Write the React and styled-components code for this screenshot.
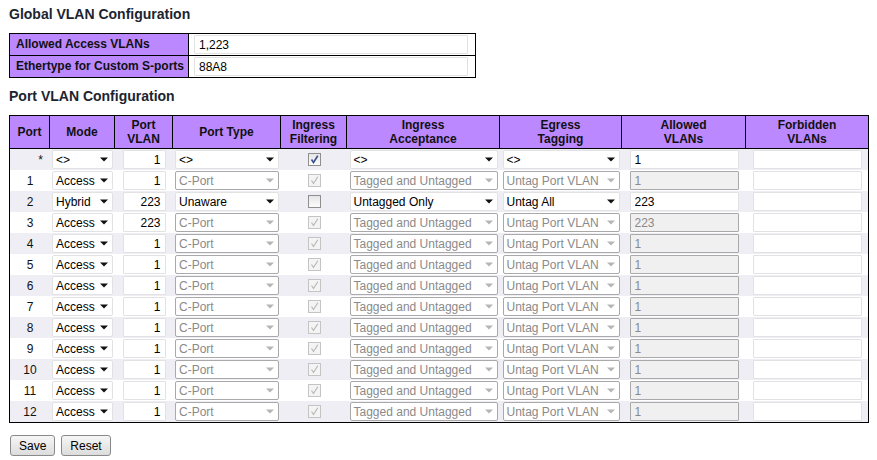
import React from "react"
import styled, { createGlobalStyle } from "styled-components"

const GlobalStyle = createGlobalStyle`
body {
    margin: 0;
    background: #fff;
    font-family: "Liberation Sans", Arial, sans-serif;
    font-size: 12px;
    color: #000;
}
`

const COLS = "40px 65px 58px 108px 66px 153px 122px 124px 122px"

const rows = [
    { port: 1, mode: "Access", pvid: 1, type: "C-Port", filt: true, acc: "Tagged and Untagged", egr: "Untag Port VLAN", allowed: "1" },
    { port: 2, mode: "Hybrid", pvid: 223, type: "Unaware", filt: false, acc: "Untagged Only", egr: "Untag All", allowed: "223", hybrid: true },
    { port: 3, mode: "Access", pvid: 223, type: "C-Port", filt: true, acc: "Tagged and Untagged", egr: "Untag Port VLAN", allowed: "223" },
    ...[4, 5, 6, 7, 8, 9, 10, 11, 12].map((p) => ({
        port: p, mode: "Access", pvid: 1, type: "C-Port", filt: true, acc: "Tagged and Untagged", egr: "Untag Port VLAN", allowed: "1",
    })),
]

const Arrow = ({ disabled }) => (
    <svg width="8" height="5" viewBox="0 0 8 5">
        <path d="M0 0.5 H8 L4 4.5 Z" fill={disabled ? "#b5b5b5" : "#111"} />
    </svg>
)

const Select = ({ value, width, disabled }) => (
    <SelectBox $width={width} $disabled={disabled}>
        <span>{value}</span>
        <Arrow disabled={disabled} />
    </SelectBox>
)

const Check = ({ checked, disabled }) => (
    <CheckBox $disabled={disabled}>
        {checked && (
            <svg width="11" height="11" viewBox="0 0 11 11">
                <path
                    d="M2.5 5.5 L4.5 8.5 L8.8 1.8"
                    fill="none"
                    stroke={disabled ? "#b8b8b8" : "#3c4f8f"}
                    strokeWidth={disabled ? 1.2 : 1.6}
                />
            </svg>
        )}
    </CheckBox>
)

const App = () => {
    return (
        <Page>
            <GlobalStyle />
            <Title>Global VLAN Configuration</Title>
            <GlobalTable>
                <GlobalRow>
                    <GlobalLabel>Allowed Access VLANs</GlobalLabel>
                    <GlobalValue><TextBox $width={274} readOnly value="1,223" /></GlobalValue>
                </GlobalRow>
                <GlobalRow>
                    <GlobalLabel>Ethertype for Custom S-ports</GlobalLabel>
                    <GlobalValue><TextBox $width={274} readOnly value="88A8" /></GlobalValue>
                </GlobalRow>
            </GlobalTable>

            <Title>Port VLAN Configuration</Title>
            <PortTable>
                <HeaderRow>
                    <Th>Port</Th>
                    <Th>Mode</Th>
                    <Th>Port<br />VLAN</Th>
                    <Th>Port Type</Th>
                    <Th>Ingress<br />Filtering</Th>
                    <Th>Ingress<br />Acceptance</Th>
                    <Th>Egress<br />Tagging</Th>
                    <Th>Allowed<br />VLANs</Th>
                    <Th $last>Forbidden<br />VLANs</Th>
                </HeaderRow>

                <Row $alt>
                    <Td $align="right">*</Td>
                    <Td><Select value="<>" width={61} /></Td>
                    <Td><TextBox $width={43} $right readOnly value="1" /></Td>
                    <Td><Select value="<>" width={104} /></Td>
                    <Td><Check checked /></Td>
                    <Td><Select value="<>" width={148} /></Td>
                    <Td><Select value="<>" width={117} /></Td>
                    <Td><TextBox $width={109} readOnly value="1" /></Td>
                    <Td><TextBox $width={109} readOnly value="" /></Td>
                </Row>

                {rows.map((r) => {
                    const dis = !r.hybrid
                    return (
                        <Row key={r.port} $alt={r.port % 2 === 0}>
                            <Td>{r.port}</Td>
                            <Td><Select value={r.mode} width={61} /></Td>
                            <Td><TextBox $width={43} $right readOnly value={r.pvid} /></Td>
                            <Td><Select value={r.type} width={104} disabled={dis} /></Td>
                            <Td><Check checked={r.filt} disabled={dis} /></Td>
                            <Td><Select value={r.acc} width={148} disabled={dis} /></Td>
                            <Td><Select value={r.egr} width={117} disabled={dis} /></Td>
                            <Td><TextBox $width={109} $disabled={dis} readOnly value={r.allowed} /></Td>
                            <Td><TextBox $width={109} readOnly value="" /></Td>
                        </Row>
                    )
                })}
            </PortTable>

            <Buttons>
                <Button>Save</Button>
                <Button>Reset</Button>
            </Buttons>
        </Page>
    )
}

const Page = styled.div`
padding: 6px 8px 0 9px;
`

const Title = styled.h2`
margin: 0 0 11px;
font-size: 14px;
line-height: 16px;
font-weight: bold;
color: #1c2431;
`

const GlobalTable = styled.div`
width: 465px;
border: 1px solid #000;
margin-bottom: 10px;
`

const GlobalRow = styled.div`
display: grid;
grid-template-columns: 179px 1fr;
height: 21px;
& + & {
    border-top: 1px solid #000;
}
`

const GlobalLabel = styled.div`
background: #bb88ff;
border-right: 1px solid #000;
font-weight: bold;
padding-left: 6px;
line-height: 21px;
color: #111;
`

const GlobalValue = styled.div`
display: flex;
align-items: center;
padding-left: 5px;
`

const PortTable = styled.div`
width: 858px;
border: 1px solid #000;
`

const HeaderRow = styled.div`
display: grid;
grid-template-columns: ${COLS};
height: 32px;
background: #bb88ff;
border-bottom: 1px solid #000;
`

const Th = styled.div`
display: flex;
align-items: center;
justify-content: center;
text-align: center;
font-weight: bold;
font-size: 12px;
line-height: 14px;
color: #111;
border-right: ${(p) => (p.$last ? "none" : "1px solid #000")};
`

const Row = styled.div`
display: grid;
grid-template-columns: ${COLS};
height: 21px;
background: ${(p) => (p.$alt ? "#eeeef4" : "#fff")};
`

const Td = styled.div`
display: flex;
align-items: center;
justify-content: ${(p) => (p.$align === "right" ? "flex-end" : "center")};
padding-right: ${(p) => (p.$align === "right" ? "7px" : "0")};
font-size: 12px;
color: #111;
`

const SelectBox = styled.div`
box-sizing: border-box;
width: ${(p) => p.$width}px;
height: 19px;
display: flex;
align-items: center;
justify-content: space-between;
padding: 0 4px 0 3px;
background: #fff;
border: 1px solid ${(p) => (p.$disabled ? "#a9a9a9" : "#e2e2e2")};
border-radius: 2px;
color: ${(p) => (p.$disabled ? "#8a8a8a" : "#000")};
font-size: 12px;
white-space: nowrap;
span {
    flex: 1;
    min-width: 0;
}
svg {
    flex: none;
    margin-left: 2px;
}
`

const TextBox = styled.input`
box-sizing: border-box;
width: ${(p) => p.$width}px;
height: 19px;
padding: 0 4px;
margin: 0;
font-family: "Liberation Sans", Arial, sans-serif;
font-size: 12px;
text-align: ${(p) => (p.$right ? "right" : "left")};
color: ${(p) => (p.$disabled ? "#8a8a8a" : "#000")};
background: ${(p) => (p.$disabled ? "#f0f0f0" : "#fff")};
border: 1px solid ${(p) => (p.$disabled ? "#a9a9a9" : "#e2e2e2")};
border-radius: 1px;
outline: none;
`

const CheckBox = styled.span`
box-sizing: border-box;
width: 13px;
height: 13px;
display: flex;
align-items: center;
justify-content: center;
border: 1px solid ${(p) => (p.$disabled ? "#c4c4c4" : "#8f8f8f")};
background: ${(p) => (p.$disabled ? "#f4f4f4" : "linear-gradient(#e6e6e6, #fbfbfb)")};
`

const Buttons = styled.div`
display: flex;
gap: 6px;
margin-top: 12px;
padding-left: 1px;
`

const Button = styled.button`
height: 21px;
padding: 0 8px;
font-family: "Liberation Sans", Arial, sans-serif;
font-size: 12px;
color: #000;
background: linear-gradient(#f6f6f6, #dcdcdc);
border: 1px solid #8a8a8a;
border-radius: 3px;
`

export default App
